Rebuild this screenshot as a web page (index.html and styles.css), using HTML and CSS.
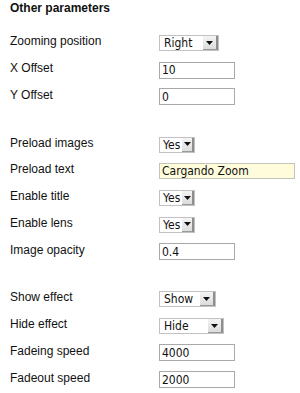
FILE: index.html
```html
<!DOCTYPE html>
<html>
<head>
<meta charset="utf-8">
<link rel="stylesheet" href="styles.css">
</head>
<body>
<h2 class="title">Other parameters</h2>
<div class="form">
  <div class="group">
    <div class="row"><label>Zooming position</label>
      <span class="sel w60"><span class="val">Right</span><span class="btn"><svg width="7" height="4" viewBox="0 0 7 4"><path d="M0 0H7L3.5 4Z" fill="#111"/></svg></span></span></div>
    <div class="row"><label>X Offset</label><input class="txt" type="text" value="10"></div>
    <div class="row"><label>Y Offset</label><input class="txt" type="text" value="0"></div>
  </div>
  <div class="group">
    <div class="row"><label>Preload images</label>
      <span class="sel w36"><span class="val">Yes</span><span class="btn"><svg width="7" height="4" viewBox="0 0 7 4"><path d="M0 0H7L3.5 4Z" fill="#111"/></svg></span></span></div>
    <div class="row"><label>Preload text</label><input class="txt wide" type="text" value="Cargando Zoom"></div>
    <div class="row"><label>Enable title</label>
      <span class="sel w36"><span class="val">Yes</span><span class="btn"><svg width="7" height="4" viewBox="0 0 7 4"><path d="M0 0H7L3.5 4Z" fill="#111"/></svg></span></span></div>
    <div class="row"><label>Enable lens</label>
      <span class="sel w36"><span class="val">Yes</span><span class="btn"><svg width="7" height="4" viewBox="0 0 7 4"><path d="M0 0H7L3.5 4Z" fill="#111"/></svg></span></span></div>
    <div class="row"><label>Image opacity</label><input class="txt" type="text" value="0.4"></div>
  </div>
  <div class="group">
    <div class="row"><label>Show effect</label>
      <span class="sel w57"><span class="val">Show</span><span class="btn"><svg width="7" height="4" viewBox="0 0 7 4"><path d="M0 0H7L3.5 4Z" fill="#111"/></svg></span></span></div>
    <div class="row"><label>Hide effect</label>
      <span class="sel w65"><span class="val">Hide</span><span class="btn"><svg width="7" height="4" viewBox="0 0 7 4"><path d="M0 0H7L3.5 4Z" fill="#111"/></svg></span></span></div>
    <div class="row"><label>Fadeing speed</label><input class="txt" type="text" value="4000"></div>
    <div class="row"><label>Fadeout speed</label><input class="txt" type="text" value="2000"></div>
  </div>
</div>
</body>
</html>
```

FILE: styles.css
```css
html, body {
  background: #fff;
}
body {
  margin: 0;
  padding: 0 10px;
  font-family: "Liberation Sans", Arial, sans-serif;
  font-size: 12px;
  color: #111;
}
.title {
  margin: 0;
  padding-top: 1px;
  font-size: 12px;
  font-weight: bold;
  line-height: 15px;
}
.form {
  margin-top: 14px;
  display: flex;
  flex-direction: column;
  gap: 21px;
}
.group {
  display: flex;
  flex-direction: column;
}
.row {
  display: grid;
  grid-template-columns: 149px auto;
  height: 26.75px;
  align-items: center;
  justify-items: start;
}
.row label {
  padding-bottom: 4px;
}
.txt {
  box-sizing: border-box;
  width: 76px;
  height: 17px;
  margin: 0;
  padding: 0 2px;
  border: 1px solid #a9a9a9;
  background: #fff;
  font-family: "DejaVu Sans", sans-serif;
  font-stretch: condensed;
  font-size: 12px;
  color: #111;
  outline: none;
}
.txt.wide {
  width: 136px;
  height: 16px;
  background: #fffcdb;
  border-color: #c4c4b8;
}
.sel {
  box-sizing: border-box;
  display: flex;
  height: 16px;
  border: 1px solid #c2c2c2;
  background: #fff;
}
.w60 { width: 60px; }
.w36 { width: 36px; }
.w57 { width: 57px; }
.w65 { width: 65px; }
.val {
  flex: 1;
  padding-left: 4px;
  font-family: "DejaVu Sans", sans-serif;
  font-stretch: condensed;
  font-size: 12px;
  line-height: 14px;
  color: #111;
}
.btn {
  box-sizing: border-box;
  width: 15px;
  display: flex;
  align-items: center;
  justify-content: center;
  background: linear-gradient(#f4f4f4, #dcdcdc);
  border-right: 2px solid #8e8e8e;
  border-bottom: 1px solid #9a9a9a;
}
.w36 .btn {
  width: 12px;
}
.w36 .val {
  padding-left: 3px;
}
```
